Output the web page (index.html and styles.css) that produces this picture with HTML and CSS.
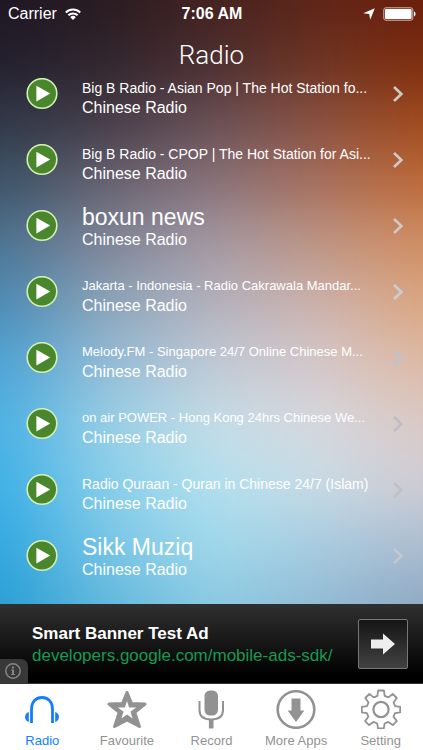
FILE: index.html
```html
<!DOCTYPE html>
<html lang="en">
<head>
<meta charset="utf-8">
<meta name="viewport" content="width=device-width, initial-scale=1">
<title>Radio</title>
<link rel="stylesheet" href="styles.css">
</head>
<body>
<svg class="defs" aria-hidden="true">
  <symbol id="play" viewBox="0 0 32 32">
    <circle cx="16" cy="15.500" r="14.800" fill="#4a872c" stroke="#d3efb5" stroke-width="1.600"/>
    <path d="M10.400 7.800v15.600L24.200 15.600z" fill="#fff"/>
  </symbol>
  <symbol id="chevron" viewBox="0 0 12 18">
    <path d="M2 2l7.400 7L2 16" fill="none" stroke="currentColor" stroke-width="2.600"/>
  </symbol>
</svg>
<div class="app">
  <main class="screen">
    <div class="backdrop" aria-hidden="true">
      <div class="blend">
        <i class="b0"></i><i class="b1"></i><i class="b2"></i><i class="b3"></i><i class="b4"></i><i class="b5"></i><i class="b6"></i><i class="b7"></i><i class="b8"></i><i class="b9"></i><i class="b10"></i>
      </div>
    </div>
    <div class="status">
      <div class="carrier">Carrier
        <svg width="16" height="13" viewBox="0 0 16 13" fill="none" stroke="#fff" stroke-width="2"><path d="M.8 4.500a10.200 10.200 0 0 1 14.400 0M3.400 7.300a6.500 6.500 0 0 1 9.200 0"/><path d="M8 12L5.200 9.200a4 4 0 0 1 5.600 0z" fill="#fff" stroke="none"/></svg>
      </div>
      <div class="time">7:06 AM</div>
      <div class="power">
        <svg width="12" height="12" viewBox="0 0 12 12"><path d="M11.800.2L7.200 11.800 6.200 6 .2 5.200z" fill="#fff"/></svg>
        <svg width="33" height="14" viewBox="0 0 33 14"><rect x=".8" y=".8" width="29" height="12.400" rx="2" fill="none" stroke="#d9b6af"/><rect x="2" y="2" width="26.600" height="10" rx="1" fill="#fff"/><path d="M31 4.600c2 .6 2 4.200 0 4.800z" fill="#fff"/></svg>
      </div>
    </div>
    <h1>Radio</h1>
    <ul class="stations">
      <li><button class="play" aria-label="Play"><svg><use href="#play"/></svg></button><a href="#"><span class="text"><span class="name">Big B Radio - Asian Pop | The Hot Station fo...</span><span class="genre">Chinese Radio</span></span><svg class="chev c1"><use href="#chevron"/></svg></a></li>
      <li><button class="play" aria-label="Play"><svg><use href="#play"/></svg></button><a href="#"><span class="text"><span class="name">Big B Radio - CPOP | The Hot Station for Asi...</span><span class="genre">Chinese Radio</span></span><svg class="chev c1"><use href="#chevron"/></svg></a></li>
      <li><button class="play" aria-label="Play"><svg><use href="#play"/></svg></button><a href="#"><span class="text"><span class="name large">boxun news</span><span class="genre">Chinese Radio</span></span><svg class="chev c1"><use href="#chevron"/></svg></a></li>
      <li><button class="play" aria-label="Play"><svg><use href="#play"/></svg></button><a href="#"><span class="text"><span class="name small">Jakarta - Indonesia - Radio Cakrawala Mandar...</span><span class="genre">Chinese Radio</span></span><svg class="chev c2"><use href="#chevron"/></svg></a></li>
      <li><button class="play" aria-label="Play"><svg><use href="#play"/></svg></button><a href="#"><span class="text"><span class="name small">Melody.FM - Singapore 24/7 Online Chinese M...</span><span class="genre">Chinese Radio</span></span><svg class="chev c3"><use href="#chevron"/></svg></a></li>
      <li><button class="play" aria-label="Play"><svg><use href="#play"/></svg></button><a href="#"><span class="text"><span class="name small">on air POWER - Hong Kong 24hrs Chinese We...</span><span class="genre">Chinese Radio</span></span><svg class="chev c4"><use href="#chevron"/></svg></a></li>
      <li><button class="play" aria-label="Play"><svg><use href="#play"/></svg></button><a href="#"><span class="text"><span class="name">Radio Quraan - Quran in Chinese 24/7 (Islam)</span><span class="genre">Chinese Radio</span></span><svg class="chev c5"><use href="#chevron"/></svg></a></li>
      <li><button class="play" aria-label="Play"><svg><use href="#play"/></svg></button><a href="#"><span class="text"><span class="name large">Sikk Muziq</span><span class="genre">Chinese Radio</span></span><svg class="chev c6"><use href="#chevron"/></svg></a></li>
    </ul>
  </main>
  <aside class="ad">
    <div class="ad-text"><strong>Smart Banner Test Ad</strong><a href="#">developers.google.com/mobile-ads-sdk/</a></div>
    <button class="go" aria-label="Open ad"><svg width="24" height="22" viewBox="0 0 24 22"><path d="M0 6.500h12V.5L24 11 12 21.500v-6H0z" fill="#eee"/></svg></button>
    <button class="info" aria-label="Ad information"><svg width="18" height="18" viewBox="0 0 18 18"><circle cx="9" cy="9" r="7.200" fill="none" stroke="#858585" stroke-width="1.500"/><path d="M8 4.500h2v2H8zM7 7.500h3V12h1v1H7v-1h1V8.500H7z" fill="#858585"/></svg></button>
  </aside>
  <nav class="tabs">
    <a href="#" class="active"><svg viewBox="0 0 40 40" fill="none" stroke="currentColor"><path d="M9.500 34V20.500c0-8 4.500-12 10.500-12s10.500 4 10.500 12V34" stroke-width="2.800"/><path d="M6.800 23c-5 1.200-5 8.800 0 10zM33.200 23c5 1.200 5 8.800 0 10z" fill="currentColor" stroke="none"/></svg>Radio</a>
    <a href="#"><svg viewBox="0 0 40 40" fill="none" stroke="currentColor"><path d="M20 3.500l4.600 11 13.400.6-10.200 8.300 4.600 14.100L20 31 7.600 37.500l4.600-14.100L2 15.100l13.400-.6z" fill="currentColor" stroke-width="3" stroke-linejoin="round"/><path d="M20 12l2.100 6.400 7 .1-5.600 4.200 2.100 6.700-5.600-3.900-5.600 3.900 2.100-6.700-5.600-4.200 7-.1z" fill="#fff" stroke="none"/></svg>Favourite</a>
    <a href="#"><svg viewBox="0 0 40 40" fill="none" stroke="currentColor"><rect x="13.500" y="1.500" width="13.500" height="25" rx="5.500" fill="currentColor" stroke="none"/><path d="M8.500 12v9c0 7 5 9.500 11.700 9.500S32 28 32 21v-9" stroke-width="2"/><path d="M20.200 30v9.500" stroke-width="4.600"/></svg>Record</a>
    <a href="#"><svg viewBox="0 0 40 40" fill="none" stroke="currentColor"><circle cx="20" cy="20.500" r="18.300" stroke-width="2.600"/><path d="M15.500 9.500h9V21.500h3.800L20 33l-8.300-11.500h3.800z" fill="currentColor" stroke="none"/></svg>More Apps</a>
    <a href="#"><svg viewBox="0 0 40 40" fill="none" stroke="currentColor" stroke-width="1.800" stroke-linejoin="round"><path d="M17.100 1.500h5.800l.8 5.300 3.700 1.600 4.400-3.400 4 4-3.200 4.500 1.500 3.600 5.100.7v5.500l-5.200.9-1.500 3.500 3.300 4.400-4 4-4.500-3.200-3.700 1.600-.8 4.900h-5.800l-.8-4.900-3.700-1.600-4.400 3.200-4-4 3.200-4.400L5.900 24.200.8 23.300v-5.500l5.200-.7 1.500-3.600-3.200-4.500 4-4 4.400 3.400 3.700-1.600z"/><circle cx="20" cy="20.500" r="7.600" stroke-width="2.200"/></svg>Setting</a>
  </nav>
</div>
</body>
</html>
```
FILE: styles.css
```css
* { box-sizing: border-box; }
body {
  margin: 0;
  font-family: "Liberation Sans", Arial, sans-serif;
  color: #fff;
}
a { color: inherit; text-decoration: none; }
button { border: 0; padding: 0; background: none; cursor: pointer; }
svg { display: block; }
.defs { position: absolute; width: 0; height: 0; }
.app { min-height: 100vh; display: flex; flex-direction: column; }

.screen { position: relative; flex: 1; isolation: isolate; }

/* Two-way colour blend: stacked horizontal gradients, blurred into each other.
   The stack bleeds past the screen so that its blur stays solid at the edges. */
.backdrop { position: absolute; inset: 0; z-index: -1; overflow: hidden; }
.blend { position: absolute; inset: -90px -80px; display: flex; flex-direction: column; filter: blur(24px); }
.blend i { flex: 1 0 0; background: linear-gradient(90deg, var(--a) 14%, var(--b) 32%, var(--c) 50%, var(--d) 68%, var(--e) 86%); }
.blend .b0, .blend .b10 { flex-basis: 60px; }
.b0 { --a: #1e1722; --b: #281b21; --c: #43221f; --d: #5f2518; --e: #6c1e0b; }
.b1 { --a: #221f2d; --b: #30252d; --c: #4c2e30; --d: #6d3423; --e: #7d2d0e; }
.b2 { --a: #303848; --b: #463d49; --c: #685056; --d: #895041; --e: #a04a1c; }
.b3 { --a: #3b5468; --b: #66616f; --c: #87727a; --d: #a66f5e; --e: #bd6a38; }
.b4 { --a: #4c7392; --b: #7f8597; --c: #a398a3; --d: #bd9484; --e: #d08d62; }
.b5 { --a: #4c8bb4; --b: #8ba4b9; --c: #b3b1bd; --d: #ccb1ac; --e: #dba680; }
.b6 { --a: #4da3d5; --b: #93bcd6; --c: #bfc9d5; --d: #d4c8cb; --e: #deb9a4; }
.b7 { --a: #4bb1e4; --b: #97cee5; --c: #c4dde7; --d: #d6d8de; --e: #dac9c5; }
.b8 { --a: #3fb0e6; --b: #88ceea; --c: #b2e0ee; --d: #c8dbe5; --e: #cfccd3; }
.b9 { --a: #31a8df; --b: #78c5e6; --c: #a1d9eb; --d: #a9cce0; --e: #adbdd0; }
.b10 { --a: #2a9ed3; --b: #62b8dd; --c: #8bcae3; --d: #92bcd5; --e: #8fa9c3; }

.status {
  height: 28px;
  padding: 0 7px 0 8px;
  display: grid;
  grid-template-columns: 1fr auto 1fr;
  align-items: center;
  font-size: 16px;
}
.carrier { display: flex; align-items: center; gap: 8px; }
.time { font-weight: bold; }
.power { display: flex; align-items: center; justify-content: flex-end; gap: 8px; }

h1 {
  margin: 0;
  height: 33px;
  line-height: 54px;
  text-align: center;
  font-family: Roboto, "Liberation Sans", sans-serif;
  font-size: 26px;
  font-weight: 300;
}
.stations { list-style: none; margin: 0; padding: 0; }
.stations li { display: flex; align-items: center; height: 66px; padding: 0 19px 0 26px; }
.play { flex: none; margin-right: 24px; }
.play svg { width: 32px; height: 32px; }
.stations a { flex: 1; min-width: 0; display: flex; align-items: center; justify-content: space-between; }
.text { min-width: 0; white-space: nowrap; padding-top: 2px; }
.name, .genre { display: block; }
.name { height: 26px; font-size: 14px; line-height: 32px; }
.name.small { font-size: 13px; }
.name.large { font-size: 23px; line-height: 26px; }
.genre { font-size: 16px; line-height: 20px; }
.chev { flex: none; width: 12px; height: 18px; color: #cfc9c9; }
.c2 { color: #c8ced6; }
.c3 { color: #bcc3cf; }
.c4 { color: #bcbdc7; }
.c5 { color: #c3c0c5; }
.c6 { color: #c3c8cf; }

.ad {
  position: relative;
  height: 80px;
  padding: 0 15px 0 32px;
  display: flex;
  align-items: center;
  justify-content: space-between;
  background: linear-gradient(#303030, #000 92%);
  border-bottom: 1px solid #333;
}
.ad-text { padding-top: 2px; font-size: 17px; line-height: 22px; white-space: nowrap; }
.ad-text strong, .ad-text a { display: block; }
.ad-text a { color: #189a50; }
.go {
  flex: none;
  width: 50px;
  height: 50px;
  display: grid;
  place-items: center;
  border: 1px solid #777;
  border-radius: 2px;
  background: linear-gradient(#151515, #424242);
}
.info {
  position: absolute;
  left: 0;
  bottom: 0;
  width: 28px;
  height: 24px;
  padding-left: 4px;
  border-radius: 0 7px 0 0;
  background: #383838;
}

.tabs {
  height: 66px;
  display: grid;
  grid-template-columns: repeat(5, 1fr);
  background: #fff;
  color: #929292;
  font-size: 13px;
  line-height: 16px;
}
.tabs a { display: flex; flex-direction: column; align-items: center; gap: 4px; padding-top: 5px; white-space: nowrap; }
.tabs svg { width: 40px; height: 40px; }
.tabs .active { color: #147efb; }
```
